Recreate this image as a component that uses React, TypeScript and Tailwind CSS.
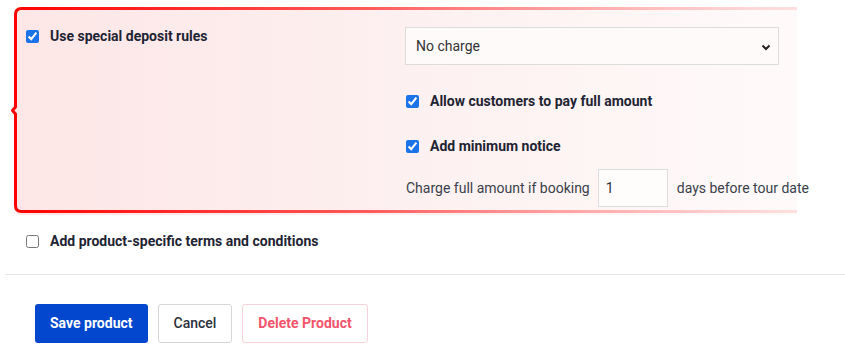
import React from 'react';

const Check: React.FC<{ checked?: boolean }> = ({ checked }) => (
  <input type="checkbox" defaultChecked={checked} className="w-[13px] h-[13px] m-0 accent-[#1a73e8] shrink-0" />
);

const Highlight: React.FC = () => (
  <svg className="absolute top-0 left-[-3px] pointer-events-none overflow-visible" width="790" height="210" viewBox="0 0 790 210">
    <defs>
      <linearGradient id="hl" x1="0" y1="0" x2="790" y2="0" gradientUnits="userSpaceOnUse">
        <stop offset="0" stopColor="#ff0000" />
        <stop offset="0.45" stopColor="#ff5a5a" />
        <stop offset="1" stopColor="#ffb0b0" stopOpacity="0.35" />
      </linearGradient>
    </defs>
    <path
      d="M785 1.5 H9.5 Q3.5 1.5 3.5 7.5 V100 L0.5 103.5 L3.5 107 V198.5 Q3.5 204.5 9.5 204.5 H785"
      fill="none"
      stroke="url(#hl)"
      strokeWidth="3"
      strokeLinejoin="round"
    />
  </svg>
);

export default function App() {
  return (
    <div className="w-[845px] h-[354px] bg-white overflow-hidden font-['Roboto','Liberation_Sans',sans-serif] text-[14px] text-[#1f2433]">
      <div className="pt-[7px] pl-[15px]">
        <div className="relative w-[782px] h-[208px] flex rounded-l-[6px] bg-gradient-to-r from-[#fde6e6] via-[#fdf0f0] to-[#fffafa]">
          <Highlight />
          <div className="w-[390px] shrink-0 pl-[11px] pt-[19px]">
            <label className="flex items-center gap-[11px]">
              <Check checked />
              <span className="font-bold">Use special deposit rules</span>
            </label>
          </div>
          <div className="pt-[20px] flex flex-col shrink-0 whitespace-nowrap">
            <div className="relative shrink-0 w-[374px] h-[38px] border border-[#dcdcdc] bg-[#fffafa] flex items-center pl-[10px] text-[#333]">
              No charge
              <svg className="absolute right-[7px] top-[16px]" width="10" height="7" viewBox="0 0 10 7">
                <path d="M1.5 1.5 L5 5 L8.5 1.5" fill="none" stroke="#222" strokeWidth="2" />
              </svg>
            </div>
            <label className="flex items-center gap-[11px] mt-[26px] pl-[1px] shrink-0">
              <Check checked />
              <span className="font-bold">Allow customers to pay full amount</span>
            </label>
            <label className="flex items-center gap-[11px] mt-[24px] pl-[1px] shrink-0">
              <Check checked />
              <span className="font-bold">Add minimum notice</span>
            </label>
            <div className="flex items-center mt-[12px] pl-[1px] shrink-0 text-[#3a3f4b]">
              <span>Charge full amount if booking</span>
              <input
                defaultValue="1"
                className="ml-[8px] mr-[9px] w-[70px] h-[38px] border border-[#dcdcdc] bg-[#fffcfc] pl-[7px] text-[14px] text-[#333] outline-none"
              />
              <span>days before tour date</span>
            </div>
          </div>
        </div>
      </div>
      <label className="flex items-center gap-[11px] pl-[26px] mt-[16px]">
        <Check />
        <span className="font-bold">Add product-specific terms and conditions</span>
      </label>
      <div className="ml-[5px] mt-[22px] border-t border-[#e6e6e6]" />
      <div className="flex gap-[10px] pl-[35px] mt-[29px]">
        <button className="h-[39px] px-[15px] rounded-[3px] bg-[#0347cf] text-white font-bold">Save product</button>
        <button className="h-[39px] px-[15px] rounded-[3px] border border-[#d6d6d6] bg-white text-[#2b2f3a] font-medium">Cancel</button>
        <button className="h-[39px] px-[15px] rounded-[3px] border border-[#fcd2da] bg-white text-[#f2546c] font-bold">Delete Product</button>
      </div>
    </div>
  );
}
